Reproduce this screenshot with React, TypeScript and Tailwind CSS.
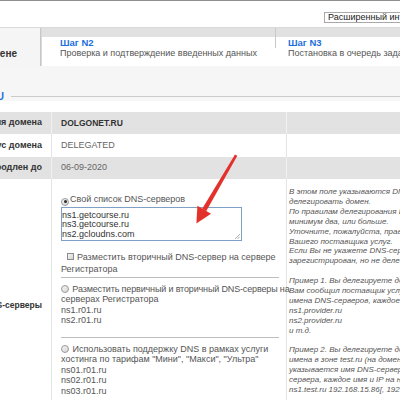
import React from 'react';

const helpLines: (string | null)[] = [
  'В этом поле указываются DNS-серверы, на которые нужно',
  'делегировать домен.',
  'По правилам делегирования DNS-серверов должно быть',
  'минимум два, или больше.',
  'Уточните, пожалуйста, правильные имена DNS-серверов у',
  'Вашего поставщика услуг.',
  'Если Вы не укажете DNS-серверы, домен будет',
  'зарегистрирован, но не делегирован.',
  null,
  'Пример 1. Вы делегируете домен на DNS-серверы, имена которых',
  'Вам сообщил поставщик услуг. В этом случае укажите',
  'имена DNS-серверов, каждое с новой строки:',
  'ns1.provider.ru',
  'ns2.provider.ru',
  'и т.д.',
  null,
  'Пример 2. Вы делегируете домен на DNS-серверы,',
  'имена в зоне test.ru (на домене). В этом случае',
  'указывается имя DNS-сервера и IP-адрес',
  'сервера, каждое имя и IP на новой строке:',
  'ns1.test.ru 192.168.15.86[, 192.168.15.87]',
];

function Radio({ checked = false }: { checked?: boolean }) {
  return (
    <span className="inline-flex w-[8px] h-[8px] mr-[1px] rounded-full border border-[#9a9a9a] bg-gradient-to-br from-[#f6f6f6] to-[#d4d4d4] items-center justify-center align-[-1px]">
      {checked && <span className="w-[3px] h-[3px] rounded-full bg-[#2b2b2b]" />}
    </span>
  );
}

function Checkbox() {
  return (
    <span className="inline-block w-[7px] h-[7px] mr-[3px] border border-[#8c8c8c] bg-gradient-to-br from-[#f6f6f6] to-[#d2d2d2] align-[-0.5px]" />
  );
}

export default function App() {
  return (
    <div className="relative w-[400px] h-[400px] overflow-hidden bg-white text-[9px] text-[#555] font-['Liberation_Sans',Arial,sans-serif]">
      <div className="w-[600px] -ml-[100px]">
        {/* Top bar */}
        <div className="h-[27px] border-t border-[#8f8f8f] pt-[11px] pl-[424px]">
          <div className="w-[130px] h-[11px] border border-[#a9a9a9] bg-white px-[3px] text-[9px] leading-[9px] text-[#222] whitespace-nowrap">
            Расширенный интерфейс
          </div>
        </div>

        {/* Steps */}
        <div className="flex h-[39px] border-t border-[#d9d9d9]">
          <div className="w-[140px] bg-[#f5f5f5] overflow-hidden flex flex-col items-end pr-[23px] pt-[8px] whitespace-nowrap">
            <span className="mr-[90px] text-[10px] leading-[12px] font-bold text-[#1a6fdc]">Шаг N1</span>
            <span className="text-[10px] leading-[12px] font-bold text-[#333]">Ввод данных о домене</span>
          </div>
          <div className="w-[2px] bg-gradient-to-r from-[#bdbdbd] to-[#e4e4e4]" />
          <div className="w-[233px] flex flex-col">
            <div className="h-[9px] bg-[#e1e1e1]" />
            <div className="pl-[18px] whitespace-nowrap">
              <div className="text-[9.5px] leading-[11px] font-bold text-[#1a6fdc]">Шаг N2</div>
              <div className="leading-[11px] text-[#555]">Проверка и подтверждение введенных данных</div>
            </div>
          </div>
          <div className="flex-1 flex">
            <div className="w-[1px] h-[20px] bg-[#c9c9c9]" />
            <div className="flex-1 flex flex-col">
              <div className="h-[9px] bg-[#e1e1e1]" />
              <div className="pl-[12px] whitespace-nowrap">
                <div className="text-[9.5px] leading-[11px] font-bold text-[#1a6fdc]">Шаг N3</div>
                <div className="leading-[11px] text-[#555]">Постановка в очередь задания на регистрацию</div>
              </div>
            </div>
          </div>
        </div>

        {/* Section title */}
        <div className="h-[35px] bg-[#f6f6f6] pt-[25px]">
          <div className="flex items-center h-[10px]">
            <div className="w-[104px] overflow-hidden flex justify-end whitespace-nowrap">
              <span className="text-[10px] font-bold text-[#1a6fdc]">DOLGONET.RU</span>
            </div>
            <div className="flex-1 h-[1px] ml-[7px] bg-[#cbcbcb]" />
          </div>
        </div>

        {/* Domain table */}
        <div className="mt-[11px] grid grid-cols-[152px_235px_213px] text-[9px]">
          <div className="h-[22px] bg-[#e2e2e2] border-r border-[#f1f1f1] flex items-center justify-end pr-[9px] font-bold text-[#333] whitespace-nowrap">Имя домена</div>
          <div className="h-[22px] bg-[#e2e2e2] border-r border-[#f1f1f1] flex items-center pl-[9px] font-bold text-[8.5px] text-[#333]">DOLGONET.RU</div>
          <div className="h-[22px] bg-[#e2e2e2]" />

          <div className="h-[23px] bg-white border-r border-[#e3e3e3] flex items-center justify-end pr-[9px] font-bold text-[#333] whitespace-nowrap">Статус домена</div>
          <div className="h-[23px] bg-white border-r border-[#e3e3e3] flex items-center pl-[9px] text-[#666]">DELEGATED</div>
          <div className="h-[23px] bg-white" />

          <div className="h-[22px] bg-[#e2e2e2] border-r border-[#f1f1f1] flex items-center justify-end pr-[9px] font-bold text-[#333] whitespace-nowrap">Продлен до</div>
          <div className="h-[22px] bg-[#e2e2e2] border-r border-[#f1f1f1] flex items-center pl-[9px] text-[#666]">06-09-2020</div>
          <div className="h-[22px] bg-[#e2e2e2]" />

          {/* DNS servers */}
          <div className="h-[240px] border-r border-[#e3e3e3] flex justify-end pr-[9px] pt-[120px] font-bold text-[8.5px] text-[#333] whitespace-nowrap">
            DNS-серверы
          </div>
          <div className="border-r border-[#e3e3e3] pl-[9px] pr-[7px] pt-[15px] text-[#555]">
            <div className="leading-[11px] whitespace-nowrap">
              <Radio checked />
              Свой список DNS-серверов
            </div>
            <div className="relative mt-[1px] w-[181px] h-[34px] border border-[#7f9fc7] bg-white pt-[3px] text-[#333] leading-[9.7px] overflow-hidden">
              <div>ns1.getcourse.ru</div>
              <div>ns3.getcourse.ru</div>
              <div>ns2.gcloudns.com</div>
              <svg className="absolute right-[1px] bottom-[1px]" width="6" height="6" viewBox="0 0 6 6">
                <path d="M1 6L6 1M3.5 6L6 3.5" stroke="#9a9a9a" strokeWidth="0.8" />
              </svg>
            </div>
            <div className="mt-[10px] leading-[12px]">
              <div className="pl-[6px] whitespace-nowrap">
                <Checkbox />
                Разместить вторичный DNS-сервер на сервере
              </div>
              <div>Регистратора</div>
            </div>
            <div className="mt-[2px] h-[1px] bg-[#bdbdbd]" />
            <div className="mt-[6px] leading-[10.5px]">
              <div className="whitespace-nowrap tracking-[-0.15px]">
                <Radio /> Разместить первичный и вторичный DNS-серверы на
              </div>
              <div>серверах Регистратора</div>
              <div>ns1.r01.ru</div>
              <div>ns2.r01.ru</div>
            </div>
            <div className="mt-[11px] h-[1px] bg-[#bdbdbd]" />
            <div className="mt-[6px] leading-[10.5px]">
              <div className="whitespace-nowrap">
                <Radio /> Использовать поддержку DNS в рамках услуги
              </div>
              <div className="whitespace-nowrap">хостинга по тарифам "Мини", "Макси", "Ультра"</div>
              <div>ns01.r01.ru</div>
              <div>ns02.r01.ru</div>
              <div>ns03.r01.ru</div>
            </div>
          </div>
          <div className="pl-[2px] pt-[8px] italic text-[8px] leading-[9.9px] text-[#555] whitespace-nowrap">
            {helpLines.map((line, i) =>
              line === null ? <div key={i} className="h-[9.9px]" /> : <div key={i}>{line}</div>
            )}
          </div>
        </div>
      </div>

      {/* Red arrow over the form */}
      <svg className="absolute left-0 top-0 pointer-events-none" width="400" height="400" viewBox="0 0 400 400">
        <polygon points="235,154.5 237.3,155.8 206.2,211.2 202.2,208.8" fill="#e3322b" />
        <polygon points="196.4,223.6 197.4,205.8 211,213.8" fill="#e3322b" />
      </svg>
    </div>
  );
}
